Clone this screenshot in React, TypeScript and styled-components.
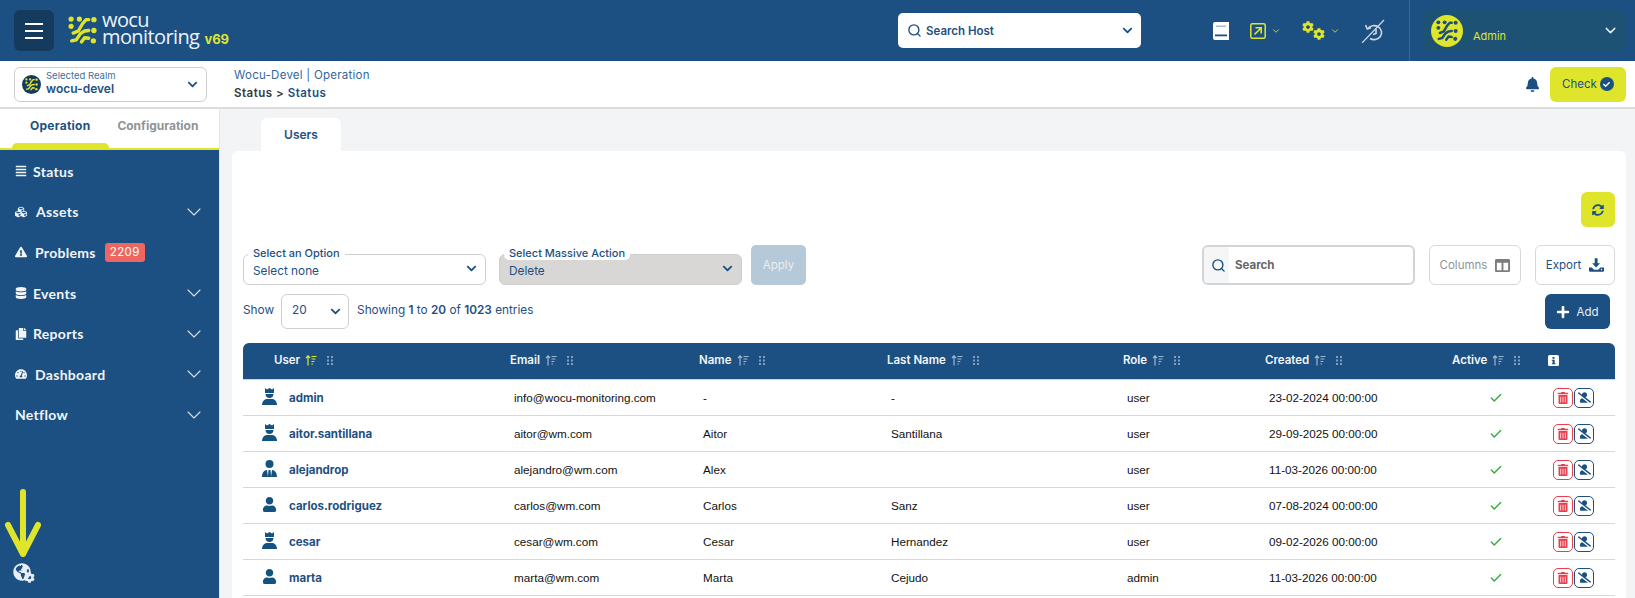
import styled, { createGlobalStyle } from "styled-components";
import {
  FaAlignJustify,
  FaBell,
  FaCheck,
  FaChevronDown,
  FaCog,
  FaColumns,
  FaCopy,
  FaCubes,
  FaDatabase,
  FaExclamationTriangle,
  FaGlobeAmericas,
  FaPlus,
  FaSyncAlt,
  FaTachometerAlt,
  FaTrashAlt,
  FaUser,
  FaUserSlash,
} from "react-icons/fa";
import { LuCheck, LuChevronDown, LuSearch } from "react-icons/lu";

const BLUE = "#1d5082";
const YELLOW = "#dfe52b";
const UI_FONT = `Inter, "Noto Sans", sans-serif`;

type UserKind = "crown" | "tie" | "plain";

const users: {
  user: string;
  email: string;
  name: string;
  lastName: string;
  role: string;
  created: string;
  kind: UserKind;
}[] = [
  { user: "admin", email: "info@wocu-monitoring.com", name: "-", lastName: "-", role: "user", created: "23-02-2024 00:00:00", kind: "crown" },
  { user: "aitor.santillana", email: "aitor@wm.com", name: "Aitor", lastName: "Santillana", role: "user", created: "29-09-2025 00:00:00", kind: "crown" },
  { user: "alejandrop", email: "alejandro@wm.com", name: "Alex", lastName: "", role: "user", created: "11-03-2026 00:00:00", kind: "tie" },
  { user: "carlos.rodriguez", email: "carlos@wm.com", name: "Carlos", lastName: "Sanz", role: "user", created: "07-08-2024 00:00:00", kind: "plain" },
  { user: "cesar", email: "cesar@wm.com", name: "Cesar", lastName: "Hernandez", role: "user", created: "09-02-2026 00:00:00", kind: "crown" },
  { user: "marta", email: "marta@wm.com", name: "Marta", lastName: "Cejudo", role: "admin", created: "11-03-2026 00:00:00", kind: "plain" },
];

const menu = [
  { label: "Status", icon: <FaAlignJustify />, slot: 18, arrow: false },
  { label: "Assets", icon: <FaCubes />, slot: 21, arrow: true },
  { label: "Problems", icon: <FaExclamationTriangle />, slot: 20, arrow: false, badge: "2209" },
  { label: "Events", icon: <FaDatabase />, slot: 18, arrow: true },
  { label: "Reports", icon: <FaCopy />, slot: 18, arrow: true },
  { label: "Dashboard", icon: <FaTachometerAlt />, slot: 20, arrow: true },
  { label: "Netflow", slot: 0, arrow: true },
];

const columns = ["User", "Email", "Name", "Last Name", "Role", "Created", "Active"];

const LogoMark = ({ color, size }: { color: string; size: number }) => (
  <svg width={size} height={size} viewBox="0 0 28 28" fill="none" stroke={color} strokeLinecap="round" strokeLinejoin="round">
    <g strokeWidth="3.2">
      <path d="M5 16.500l5-2 4-7 3.500-4H20" />
      <path d="M3.500 24l4.500-1 4-6 4-2.500 4-.5" />
      <path d="M13 25l3-4 4 .5" />
    </g>
    <g fill={color} stroke="none">
      <circle cx="3" cy="3" r="2.500" />
      <circle cx="11" cy="3" r="2.500" />
      <circle cx="3" cy="10" r="2.500" />
      <circle cx="25" cy="3.500" r="2.600" />
      <circle cx="25" cy="14" r="2.600" />
      <circle cx="24.500" cy="24" r="2.600" />
    </g>
  </svg>
);

const SortIcon = ({ active }: { active?: boolean }) => (
  <svg width="12" height="11" viewBox="0 0 12 11" fill="none" stroke={active ? YELLOW : "#9db8d0"} strokeWidth="1.2">
    <path d="M3 10.5V1M1 3l2-2.2L5 3" />
    <path d="M6.5 1.5h5M6.5 4h4M6.5 6.5h2.8M6.5 9h1.6" />
  </svg>
);

const GripIcon = () => (
  <svg width="6" height="9" viewBox="0 0 6 9" fill="#7f9fbd">
    {[0, 3.5, 7].map((y) => (
      <g key={y}>
        <rect x="0" y={y} width="2" height="2" />
        <rect x="4" y={y} width="2" height="2" />
      </g>
    ))}
  </svg>
);

const BookIcon = () => (
  <svg width="16" height="18" viewBox="0 0 16 18">
    <path d="M2 0h14v18H2a2 2 0 0 1-2-2V2a2 2 0 0 1 2-2z" fill="#fff" />
    <rect x="3" y="3.500" width="10" height="1.500" fill="#a9bccd" />
    <rect x="2" y="12.500" width="12" height="1.800" fill={BLUE} />
  </svg>
);

const ExternalIcon = () => (
  <svg width="16" height="16" viewBox="0 0 16 16" fill="none" stroke={YELLOW} strokeWidth="1.5">
    <rect x="0.800" y="0.800" width="14.400" height="14.400" rx="1.500" />
    <path d="M4.500 11.500l6.500-6.500M5.500 4.800h5.700v5.700" strokeWidth="1.600" />
  </svg>
);

const HistorySlashIcon = () => (
  <svg width="24" height="24" viewBox="0 0 24 24" fill="none" stroke="#cfd8e2" strokeWidth="1.600">
    <path d="M7 9.500A7.500 7 0 1 1 9 19.500" />
    <path d="M4.500 6l1.800 4 3.700-1.200" />
    <path d="M15 10v4.500l-3 1" />
    <path d="M23 1L1 24" strokeWidth="1.200" />
  </svg>
);

const DownloadIcon = () => (
  <svg width="15" height="14" viewBox="0 0 21 19" fill={BLUE}>
    <path d="M8 0h4v7h3.500L10 13 4.500 7H8z" />
    <path d="M0 13h4l3 3h6l3-3h5v4.500a1.500 1.500 0 0 1-1.500 1.500h-18A1.500 1.500 0 0 1 0 17.500z" />
    <circle cx="17.500" cy="15.800" r="1" fill="#fff" />
  </svg>
);

const InfoSquare = () => (
  <svg width="11" height="11" viewBox="0 0 11 11">
    <rect width="11" height="11" rx="1.500" fill="#fff" />
    <rect x="4.500" y="2" width="2" height="1.800" fill={BLUE} />
    <path d="M3.800 4.800h2.900v3.400h.8v1H3.800v-1h.8V5.800h-.8z" fill={BLUE} />
  </svg>
);

const UserKindIcon = ({ kind }: { kind: UserKind }) => {
  if (kind === "plain") return <FaUser size={15} color="#14527f" />;
  return (
    <svg width="15" height="17" viewBox="0 0 15 17" fill="#14527f">
      {kind === "crown" ? (
        <>
          <path d="M3 0l2 1.600L7.500 0 10 1.600 12 0v5H3z" />
          <path d="M3.500 6h8c0 2.500-1.700 4-4 4s-4-1.500-4-4z" />
          <path d="M0 17c0-3.400 2.400-6 5-6h5c2.600 0 5 2.600 5 6z" />
        </>
      ) : (
        <>
          <circle cx="7.500" cy="4" r="4" />
          <path d="M0 17c0-4 2-7 5-7l1 7zM15 17c0-4-2-7-5-7l-1 7z" />
          <path d="M6.500 10h2l.6 7H5.900z" />
        </>
      )}
    </svg>
  );
};

const App = () => {
  return (
    <>
      <GlobalStyle />
      <Page>
        <TopBar>
          <MenuButton aria-label="menu">
            <span />
            <span />
            <span />
          </MenuButton>
          <Logo>
            <LogoMark color={YELLOW} size={29} />
            <LogoText>
              <span>wocu</span>
              <span>
                monitoring<Version>v69</Version>
              </span>
            </LogoText>
          </Logo>
          <HostSearch>
            <LuSearch size={15} strokeWidth={2.2} />
            <HostLabel>Search Host</HostLabel>
            <FaChevronDown size={11} />
          </HostSearch>
          <TopIcons>
            <BookIcon />
            <IconGroup>
              <ExternalIcon />
              <LuChevronDown size={10} color={YELLOW} />
            </IconGroup>
            <IconGroup>
              <GearPair>
                <FaCog size={12} color={YELLOW} />
                <FaCog size={12} color={YELLOW} />
              </GearPair>
              <LuChevronDown size={10} color={YELLOW} />
            </IconGroup>
            <HistorySlashIcon />
          </TopIcons>
          <UserBox>
            <Avatar>
              <LogoMark color="#1d5082" size={22} />
            </Avatar>
            <AdminName>Admin</AdminName>
            <LuChevronDown size={17} color="#e8eef4" />
          </UserBox>
        </TopBar>

        <SubBar>
          <RealmBox>
            <RealmLogo>
              <LogoMark color={YELLOW} size={13} />
            </RealmLogo>
            <RealmText>
              <small>Selected Realm</small>
              <strong>wocu-devel</strong>
            </RealmText>
            <FaChevronDown size={11} color={BLUE} />
          </RealmBox>
          <Crumbs>
            <span>Wocu-Devel | Operation</span>
            <strong>
              <em>Status &gt;</em> Status
            </strong>
          </Crumbs>
          <FaBell size={15} color={BLUE} />
          <CheckButton>
            Check
            <CheckDot>
              <FaCheck size={7} color="#fff" />
            </CheckDot>
          </CheckButton>
        </SubBar>

        <Body>
          <Side>
            <SideTabs>
              <SideTab $active>Operation</SideTab>
              <SideTab>Configuration</SideTab>
            </SideTabs>
            <SideMenu>
              {menu.map((item) => (
                <MenuRow key={item.label}>
                  {item.icon && <MenuIcon $slot={item.slot}>{item.icon}</MenuIcon>}
                  <MenuLabel>{item.label}</MenuLabel>
                  {item.badge && <Badge>{item.badge}</Badge>}
                  {item.arrow && <MenuArrow size={24} strokeWidth={1.1} />}
                </MenuRow>
              ))}
            </SideMenu>
            <SideFooter>
              <GlobeGear>
                <FaGlobeAmericas size={18} color="#e8eef4" />
                <FaCog size={11} color="#e8eef4" />
              </GlobeGear>
            </SideFooter>
            <ArrowMark width="36" height="68" viewBox="0 0 36 68" fill="none" stroke={YELLOW} strokeWidth="6" strokeLinecap="round" strokeLinejoin="round">
              <path d="M18 3v62M3 36l15 29 15-29" />
            </ArrowMark>
          </Side>

          <Main>
            <Tab>Users</Tab>
            <Card>
              <RefreshRow>
                <RefreshButton aria-label="refresh">
                  <FaSyncAlt size={12} />
                </RefreshButton>
              </RefreshRow>
              <FilterRow>
                <Field>
                  <FieldLabel>Select an Option</FieldLabel>
                  <SelectBox>
                    Select none
                    <FaChevronDown size={11} />
                  </SelectBox>
                </Field>
                <Field>
                  <FieldLabel>Select Massive Action</FieldLabel>
                  <SelectBox $disabled>
                    Delete
                    <FaChevronDown size={11} />
                  </SelectBox>
                </Field>
                <ApplyButton>Apply</ApplyButton>
                <SearchBox>
                  <SearchIconCell>
                    <LuSearch size={15} strokeWidth={2.2} />
                  </SearchIconCell>
                  <SearchText>Search</SearchText>
                </SearchBox>
                <OutlineButton $muted $width={92}>
                  Columns
                  <FaColumns size={15} color="#7d7d7d" />
                </OutlineButton>
                <OutlineButton $width={80}>
                  Export
                  <DownloadIcon />
                </OutlineButton>
              </FilterRow>
              <ShowRow>
                <span>Show</span>
                <PageSize>
                  <PageSizeValue>20</PageSizeValue>
                  <FaChevronDown size={11} />
                </PageSize>
                <span>
                  Showing <b>1</b> to <b>20</b> of <b>1023</b> entries
                </span>
                <AddButton>
                  <FaPlus size={14} color="#fff" />
                  Add
                </AddButton>
              </ShowRow>
              <TableHead>
                {columns.map((col, i) => (
                  <HeadCell key={col}>
                    {col}
                    <SortIcon active={i === 0} />
                    <GripSpace>
                      <GripIcon />
                    </GripSpace>
                  </HeadCell>
                ))}
                <HeadCell>
                  <InfoSquare />
                </HeadCell>
              </TableHead>
              {users.map((u) => (
                <TableRow key={u.user}>
                  <UserCell>
                    <UserIconSlot>
                      <UserKindIcon kind={u.kind} />
                    </UserIconSlot>
                    {u.user}
                  </UserCell>
                  <Cell>{u.email}</Cell>
                  <Cell>{u.name}</Cell>
                  <Cell>{u.lastName}</Cell>
                  <Cell>{u.role}</Cell>
                  <Cell>{u.created}</Cell>
                  <ActiveCell>
                    <LuCheck size={14} strokeWidth={2.4} color="#2fae3a" />
                  </ActiveCell>
                  <ActionsCell>
                    <RowAction $color="#e8404f">
                      <FaTrashAlt size={12} />
                    </RowAction>
                    <RowAction $color={BLUE}>
                      <FaUserSlash size={13} />
                    </RowAction>
                  </ActionsCell>
                </TableRow>
              ))}
            </Card>
          </Main>
        </Body>
      </Page>
    </>
  );
};

export default App;

const GlobalStyle = createGlobalStyle`
  html, body {
    margin: 0;
    height: 100%;
    overflow: hidden;
    background: #f3f4f6;
  }
  * {
    box-sizing: border-box;
  }
`;

const Page = styled.div`
  width: 1635px;
  height: 598px;
  display: flex;
  flex-direction: column;
  overflow: hidden;
  font-family: ${UI_FONT};
  color: ${BLUE};
`;

const TopBar = styled.header`
  height: 61px;
  flex: none;
  background: ${BLUE};
  display: flex;
  align-items: center;
  padding: 0 10px 0 14px;
`;

const MenuButton = styled.button`
  width: 40px;
  height: 41px;
  border: none;
  border-radius: 6px;
  background: #143a5e;
  display: flex;
  flex-direction: column;
  align-items: center;
  justify-content: center;
  gap: 5px;
  padding: 0;
  span {
    display: block;
    width: 18px;
    height: 2px;
    background: #fff;
  }
`;

const Logo = styled.div`
  display: flex;
  align-items: center;
  gap: 5px;
  margin-left: 14px;
  width: 830px;
  flex: none;
  color: #eef3f7;
`;

const LogoText = styled.div`
  display: flex;
  flex-direction: column;
  font-family: "Open Sans", sans-serif;
  font-size: 20px;
  line-height: 17px;
  letter-spacing: -0.6px;
  padding-bottom: 2px;
`;

const Version = styled.b`
  color: ${YELLOW};
  font-family: ${UI_FONT};
  font-size: 13px;
  letter-spacing: 0;
  margin-left: 5px;
`;

const HostSearch = styled.div`
  width: 243px;
  height: 35px;
  flex: none;
  background: #fff;
  border-radius: 5px;
  display: flex;
  align-items: center;
  padding: 0 8px 0 9px;
  color: ${BLUE};
`;

const HostLabel = styled.span`
  flex: 1;
  margin-left: 4px;
  font-size: 11.500px;
  font-weight: 600;
`;

const TopIcons = styled.div`
  display: flex;
  align-items: center;
  gap: 21px;
  margin-left: 72px;
  width: 197px;
  flex: none;
  height: 61px;
  border-right: 1px solid #3b6a8f;
`;

const IconGroup = styled.div`
  display: flex;
  align-items: center;
  gap: 5px;
`;

const GearPair = styled.div`
  display: flex;
  svg:last-child {
    margin: 7px 0 0 -1px;
  }
`;

const UserBox = styled.div`
  width: 201px;
  height: 41px;
  margin-left: 14px;
  background: #1e5274;
  border-radius: 6px;
  display: flex;
  align-items: center;
  padding: 0 6px 0 7px;
`;

const Avatar = styled.div`
  width: 32px;
  height: 32px;
  border-radius: 50%;
  background: ${YELLOW};
  display: flex;
  align-items: center;
  justify-content: center;
`;

const AdminName = styled.span`
  flex: 1;
  color: ${YELLOW};
  font-size: 11px;
  margin-left: 10px;
  padding-top: 11px;
`;

const SubBar = styled.div`
  height: 48px;
  flex: none;
  background: #fff;
  border-bottom: 2px solid #dcdcdc;
  display: flex;
  align-items: center;
  padding: 0 9px 0 14px;
`;

const RealmBox = styled.div`
  width: 193px;
  height: 35px;
  border: 1px solid #cfcfcf;
  border-radius: 6px;
  display: flex;
  align-items: center;
  padding: 0 8px 0 7px;
`;

const RealmLogo = styled.div`
  width: 19px;
  height: 19px;
  border-radius: 50%;
  background: #143a5e;
  display: flex;
  align-items: center;
  justify-content: center;
`;

const RealmText = styled.div`
  flex: 1;
  display: flex;
  flex-direction: column;
  margin: -2px 0 0 5px;
  small {
    font-size: 9.500px;
    line-height: 11px;
    color: #3f6f9b;
  }
  strong {
    font-size: 12px;
    line-height: 15px;
    font-weight: 600;
  }
`;

const Crumbs = styled.div`
  flex: 1;
  display: flex;
  flex-direction: column;
  gap: 5px;
  margin-left: 27px;
  font-size: 11.500px;
  line-height: 13px;
  letter-spacing: 0.25px;
  color: #33689a;
  strong {
    font-weight: 600;
    color: ${BLUE};
    letter-spacing: 0.5px;
  }
  em {
    font-style: normal;
    color: #35393f;
  }
`;

const CheckButton = styled.button`
  width: 76px;
  height: 35px;
  margin-left: 10px;
  border: none;
  border-radius: 6px;
  background: ${YELLOW};
  color: ${BLUE};
  font-family: ${UI_FONT};
  font-size: 11.500px;
  display: flex;
  align-items: center;
  justify-content: center;
  gap: 3px;
  padding: 0;
`;

const CheckDot = styled.span`
  width: 14px;
  height: 14px;
  border-radius: 50%;
  background: ${BLUE};
  display: flex;
  align-items: center;
  justify-content: center;
`;

const Body = styled.div`
  flex: 1;
  display: flex;
  min-height: 0;
`;

const Side = styled.aside`
  position: relative;
  width: 219px;
  flex: none;
  display: flex;
  flex-direction: column;
  background: ${BLUE};
`;

const SideTabs = styled.div`
  height: 41px;
  flex: none;
  background: #fff;
  border-bottom: 2px solid ${YELLOW};
  display: flex;
  gap: 27px;
  padding-left: 30px;
`;

const SideTab = styled.div<{ $active?: boolean }>`
  position: relative;
  font-size: 12px;
  font-weight: 700;
  letter-spacing: ${(p) => (p.$active ? "0.25px" : "0")};
  padding-top: 9px;
  color: ${(p) => (p.$active ? BLUE : "#8f9498")};
  ${(p) =>
    p.$active &&
    `&::after {
      content: "";
      position: absolute;
      left: -18px;
      bottom: -2px;
      width: 97px;
      height: 7px;
      background: ${YELLOW};
      border-radius: 5px 5px 0 0;
    }`}
`;

const SideMenu = styled.nav`
  display: flex;
  flex-direction: column;
  padding-top: 1px;
`;

const MenuRow = styled.div`
  height: 40.600px;
  display: flex;
  align-items: center;
  padding: 0 13px 0 15px;
  color: #f1f5f8;
`;

const MenuIcon = styled.span<{ $slot: number }>`
  display: flex;
  width: ${(p) => p.$slot}px;
  font-size: 12px;
`;

const MenuLabel = styled.span`
  font-family: Lato, sans-serif;
  font-size: 14px;
  font-weight: 700;
  letter-spacing: 0.3px;
`;

const Badge = styled.span`
  margin-left: 9px;
  padding: 0 5px;
  height: 19px;
  line-height: 19px;
  border-radius: 3px;
  background: #ee6660;
  color: #fff;
  font-size: 11.500px;
  letter-spacing: 0.4px;
`;

const MenuArrow = styled(LuChevronDown)`
  margin-left: auto;
  color: #d5dfe8;
`;

const SideFooter = styled.div`
  margin-top: auto;
  padding: 0 0 17px 13px;
`;

const GlobeGear = styled.div`
  display: flex;
  align-items: flex-end;
  svg:last-child {
    margin-left: -7px;
    margin-bottom: -2px;
  }
`;

const ArrowMark = styled.svg`
  position: absolute;
  left: 5px;
  bottom: 41px;
`;

const Main = styled.main`
  flex: 1;
  min-width: 0;
  padding: 9px 9px 0 12px;
  background: #f3f4f6;
  border-left: 1px solid #e4e6e8;
`;

const Tab = styled.div`
  width: 80px;
  height: 33px;
  margin-left: 29px;
  background: #fff;
  border-radius: 6px 6px 0 0;
  text-align: center;
  font-size: 12px;
  font-weight: 600;
  line-height: 34px;
`;

const Card = styled.section`
  background: #fff;
  border-radius: 6px 6px 0 0;
  padding: 0 11px;
  height: 460px;
  overflow: hidden;
`;

const RefreshRow = styled.div`
  height: 94px;
  padding-top: 41px;
  display: flex;
  justify-content: flex-end;
`;

const RefreshButton = styled.button`
  width: 34px;
  height: 35px;
  border: none;
  border-radius: 6px;
  background: ${YELLOW};
  color: ${BLUE};
  display: flex;
  align-items: center;
  justify-content: center;
  padding: 0;
`;

const FilterRow = styled.div`
  display: flex;
  align-items: flex-end;
  height: 40px;
`;

const Field = styled.div`
  position: relative;
  flex: none;
  width: 243px;
  margin-right: 13px;
`;

const FieldLabel = styled.span`
  position: absolute;
  left: 5px;
  top: -8px;
  padding: 0 5px;
  background: #fff;
  border-radius: 0 0 5px 5px;
  font-size: 11px;
  line-height: 14px;
  font-weight: 500;
`;

const SelectBox = styled.div<{ $disabled?: boolean }>`
  height: 31px;
  border: 1px solid #cfcfcf;
  border-radius: 6px;
  background: ${(p) => (p.$disabled ? "#d8d7d5" : "#fff")};
  display: flex;
  align-items: center;
  justify-content: space-between;
  padding: 2px 8px 0 9px;
  font-size: 11.800px;
  svg {
    margin-top: -4px;
  }
`;

const ApplyButton = styled.div`
  width: 55px;
  height: 40px;
  flex: none;
  margin-left: -4px;
  border-radius: 5px;
  background: #b5c9d9;
  color: #e8eef3;
  font-size: 11.500px;
  display: flex;
  align-items: center;
  justify-content: center;
`;

const SearchBox = styled.div`
  width: 213px;
  height: 40px;
  flex: none;
  margin-left: auto;
  border: 2px solid #d4d4d4;
  border-radius: 6px;
  display: flex;
  overflow: hidden;
`;

const SearchIconCell = styled.div`
  width: 25px;
  padding-left: 3px;
  background: #f4f6f8;
  display: flex;
  align-items: center;
  justify-content: center;
`;

const SearchText = styled.span`
  margin-left: 6px;
  align-self: center;
  font-size: 11.500px;
  font-weight: 700;
  color: #666;
`;

const OutlineButton = styled.div<{ $muted?: boolean; $width: number }>`
  width: ${(p) => p.$width}px;
  height: 40px;
  flex: none;
  margin-left: 14px;
  border: 1px solid #d8d8d8;
  border-radius: 6px;
  display: flex;
  align-items: center;
  justify-content: center;
  gap: 8px;
  font-size: 11.500px;
  color: ${(p) => (p.$muted ? "#8f9498" : BLUE)};
`;

const ShowRow = styled.div`
  height: 58px;
  padding: 9px 5px 0 0;
  display: flex;
  align-items: flex-start;
  font-size: 11.800px;
  span {
    line-height: 32px;
  }
  b {
    font-weight: 600;
  }
`;

const PageSize = styled.div`
  width: 68px;
  height: 35px;
  margin: 0 8px 0 7px;
  border: 1px solid #cfcfcf;
  border-radius: 6px;
  display: flex;
  align-items: center;
  justify-content: space-between;
  padding: 0 7px 0 10px;
`;

const PageSizeValue = styled.em`
  font-style: normal;
  margin-top: -3px;
`;

const AddButton = styled.button`
  width: 65px;
  height: 35px;
  margin-left: auto;
  border: none;
  border-radius: 6px;
  background: ${BLUE};
  color: #e8eef4;
  font-family: ${UI_FONT};
  font-size: 11.500px;
  display: flex;
  align-items: center;
  justify-content: center;
  gap: 6px;
  padding: 0;
`;

const rowColumns = "267px 189px 188px 236px 142px 187px 96px 67px";

const TableHead = styled.div`
  height: 37px;
  display: grid;
  grid-template-columns: ${rowColumns};
  background: ${BLUE};
  border-radius: 6px 6px 0 0;
  border-bottom: 1px solid #c9d6e0;
`;

const HeadCell = styled.div`
  display: flex;
  align-items: center;
  gap: 5px;
  padding-bottom: 2px;
  color: #f1f5f8;
  font-size: 11.500px;
  font-weight: 600;
  &:first-child {
    padding-left: 31px;
  }
`;

const GripSpace = styled.span`
  display: flex;
  margin-left: 5px;
`;

const TableRow = styled.div`
  height: 36px;
  display: grid;
  grid-template-columns: ${rowColumns};
  align-items: center;
  border-bottom: 1px solid #d8d8d8;
  font-family: "Liberation Sans", Arial, sans-serif;
  font-size: 11.700px;
  color: #111;
`;

const Cell = styled.div`
  padding-left: 4px;
`;

const UserCell = styled.div`
  display: flex;
  align-items: center;
  padding-left: 19px;
  font-family: ${UI_FONT};
  font-size: 11.500px;
  font-weight: 700;
  color: ${BLUE};
`;

const UserIconSlot = styled.span`
  display: flex;
  width: 27px;
  padding-bottom: 3px;
`;

const ActiveCell = styled.div`
  display: flex;
  padding-left: 37px;
`;

const ActionsCell = styled.div`
  display: flex;
  gap: 1px;
  padding-left: 5px;
`;

const RowAction = styled.span<{ $color: string }>`
  width: 20px;
  height: 20px;
  border: 1px solid ${(p) => p.$color};
  border-radius: 5px;
  color: ${(p) => p.$color};
  display: flex;
  align-items: center;
  justify-content: center;
`;
